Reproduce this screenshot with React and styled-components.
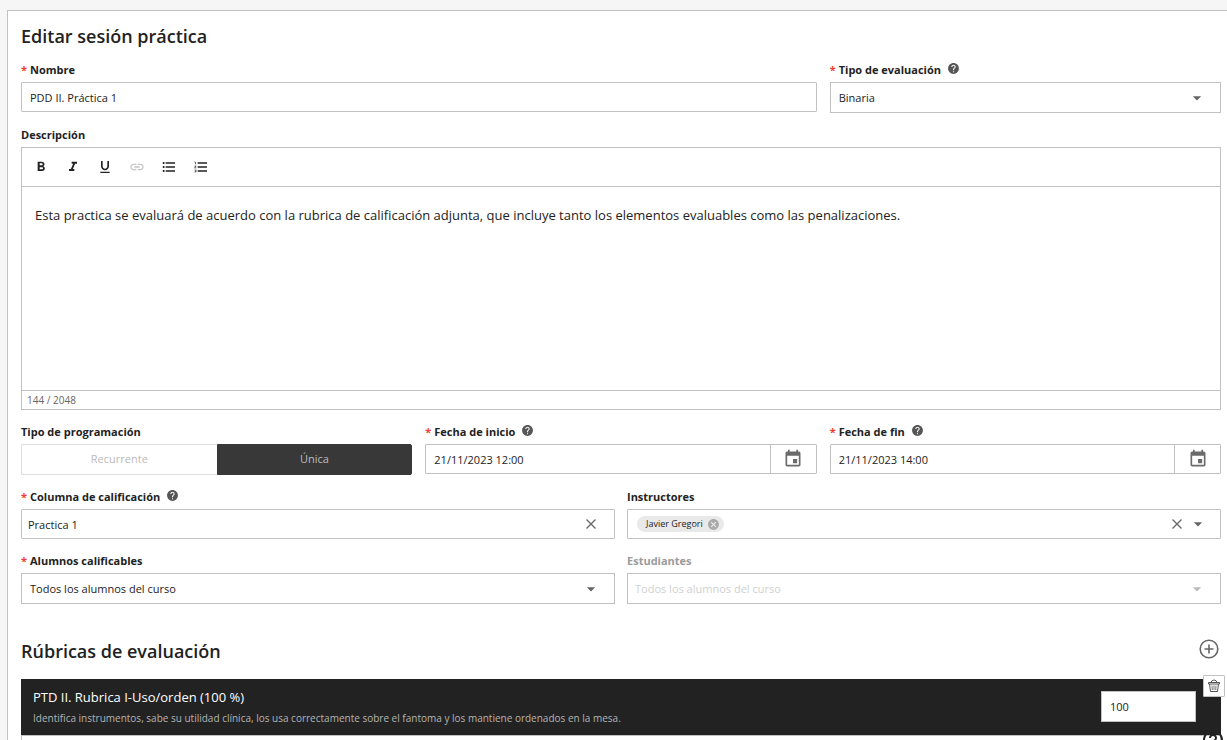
import React, { useId, useState } from "react";
import styled, { createGlobalStyle } from "styled-components";
import {
  MdHelp,
  MdHelpOutline,
  MdFormatBold,
  MdFormatItalic,
  MdFormatUnderlined,
  MdInsertLink,
  MdFormatListBulleted,
  MdFormatListNumbered,
  MdEvent,
  MdCancel,
  MdArrowDropDown,
} from "react-icons/md";

const GlobalStyle = createGlobalStyle`
  * { box-sizing: border-box; }
  html { scrollbar-width: none; }
  body {
    margin: 0;
    background: #f6f6f6;
    color: #222;
    font-family: "Open Sans", "Noto Sans", sans-serif;
    font-size: 11px;
  }
  button, input, select, textarea { font: inherit; color: inherit; }
  button { cursor: pointer; }
  svg { display: block; flex: none; }
`;

const Card = styled.main`
  margin: 10px 0 0 7px;
  padding: 12px 6px 40px 13px;
  background: #fff;
  border: 1px solid #c1c1c1;
  border-width: 1px 0 0 1px;
`;

const Title = styled.h1`
  margin: 0 0 13px;
  font-size: 18px;
  line-height: 26px;
  font-weight: 600;
`;

const Grid = styled.div`
  display: grid;
  grid-template-columns: repeat(${(p) => p.$columns}, minmax(0, 1fr));
  column-gap: ${(p) => (p.$columns === 2 ? 12 : 13)}px;
  align-items: start;
  margin-bottom: 14px;
`;

const FieldBox = styled.div`
  grid-column: span ${(p) => p.$span || 1};
  min-width: 0;
`;

const LabelLine = styled.div`
  display: flex;
  align-items: center;
  gap: 6px;
  height: 16px;
  margin-bottom: 4px;
  font-weight: 700;
  line-height: 16px;
  color: ${(p) => (p.$muted ? "#9b9b9b" : "#222")};
`;

const Required = styled.span`
  margin-right: 3px;
  color: #f23b34;
`;

const HelpButton = styled.button`
  display: flex;
  align-self: flex-start;
  padding: 0;
  border: 0;
  background: none;
  color: #555;
`;

const Control = styled.div`
  display: flex;
  align-items: center;
  position: relative;
  height: ${(p) => (p.$tall ? 31 : 30)}px;
  border: 1px solid #c1c1c1;
  border-radius: ${(p) => (p.$tall ? 0 : 1)}px;
  background: #fff;
`;

const TextInput = styled.input`
  flex: 1;
  min-width: 0;
  height: 100%;
  padding: 0 ${(p) => (p.$tight ? 6 : 8)}px;
  border: 0;
  outline: 0;
  background: none;
`;

const Select = styled.select`
  width: 100%;
  height: 100%;
  padding: 0 40px 1px ${(p) => (p.disabled ? 7 : 8)}px;
  border: 0;
  outline: 0;
  appearance: none;
  background: none;
  &:disabled { color: #d0d0d0; opacity: 1; }
`;

const SelectArrow = styled.span`
  position: absolute;
  right: 13px;
  color: ${(p) => (p.$muted ? "#bbb" : "#666")};
  pointer-events: none;
`;

const IconButton = styled.button`
  display: flex;
  padding: 0;
  border: 0;
  background: none;
  color: #666;
`;

const Trailing = styled.div`
  display: flex;
  align-items: center;
  gap: 4px;
  margin-left: auto;
  padding-right: ${(p) => (p.$wide ? 16 : 12)}px;
`;

const CalendarButton = styled.button`
  display: flex;
  align-items: center;
  justify-content: center;
  width: 46px;
  height: 100%;
  padding: 0 0 1px;
  border: 0;
  border-left: 1px solid #c1c1c1;
  background: none;
  color: #6b6b6b;
`;

const Editor = styled.div`
  border: 1px solid #c1c1c1;
`;

const Toolbar = styled.div`
  display: flex;
  align-items: center;
  gap: 16px;
  height: 39px;
  padding-left: 11px;
  border-bottom: 1px solid #c1c1c1;
`;

const ToolButton = styled.button`
  display: flex;
  padding: 0;
  border: 0;
  background: none;
  color: #222;
  &:disabled { color: #c4c4c4; }
`;

const EditorText = styled.textarea`
  display: block;
  width: 100%;
  height: 203px;
  padding: 18px 13px;
  border: 0;
  outline: 0;
  resize: none;
  font-size: 13px;
  line-height: 20px;
`;

const Counter = styled.div`
  padding-left: 5px;
  border-top: 1px solid #c1c1c1;
  font-size: 10px;
  line-height: 18px;
  color: #666;
`;

const Segmented = styled.div`
  display: grid;
  grid-template-columns: 1fr 1fr;
  height: 31px;
`;

const Segment = styled.button`
  padding: 0 0 2px;
  border: 1px solid ${(p) => (p.$active ? "#383838" : "#dedede")};
  border-right-width: ${(p) => (p.$active ? 1 : 0)}px;
  border-radius: ${(p) => (p.$active ? "0 2px 2px 0" : "2px 0 0 2px")};
  background: ${(p) => (p.$active ? "#383838" : "#fff")};
  color: ${(p) => (p.$active ? "#bdbdbd" : "#bbb")};
`;

const Chip = styled.span`
  display: flex;
  align-items: center;
  gap: 4px;
  height: 16px;
  margin-left: 9px;
  padding: 0 4px 0 9px;
  border-radius: 8px;
  background: #e9e9e9;
  font-size: 9px;
  line-height: 16px;
`;

const ChipRemove = styled(IconButton)`
  color: #aaa;
`;

const SectionHeader = styled.div`
  display: flex;
  align-items: center;
  justify-content: space-between;
  margin: 34px 0 15px;
  padding-right: 2px;
`;

const SectionTitle = styled.h2`
  margin: 0;
  font-size: 18px;
  line-height: 26px;
  font-weight: 600;
`;

const AddButton = styled(IconButton)`
  margin-bottom: 5px;
`;

const Rubric = styled.section`
  position: relative;
`;

const RubricHeader = styled.header`
  display: flex;
  align-items: center;
  justify-content: space-between;
  height: 56px;
  padding: 0 25px 1px 12px;
  background: #222;
`;

const RubricName = styled.h3`
  margin: 0;
  font-size: 13px;
  line-height: 20px;
  font-weight: 400;
  color: #fff;
`;

const RubricNote = styled.p`
  margin: 2px 0 0;
  font-size: 10px;
  line-height: 18px;
  font-weight: 400;
  color: #b4b4b4;
`;

const WeightInput = styled.input`
  width: 95px;
  height: 31px;
  padding: 0 8px;
  border: 1px solid #c1c1c1;
  outline: 0;
  background: #fff;
`;

const DeleteButton = styled.button`
  position: absolute;
  top: -4px;
  right: -4px;
  display: flex;
  align-items: center;
  justify-content: center;
  width: 22px;
  height: 22px;
  padding: 0;
  border: 1px solid #c1c1c1;
  border-radius: 1px;
  background: #fff;
  color: #555;
`;

const RubricBody = styled.div`
  min-height: 40px;
  border: 1px solid #c1c1c1;
`;

const RubricHelp = styled(IconButton)`
  position: absolute;
  top: 49px;
  right: -4px;
  color: #222;
`;

function Field({ label, id, required, help, muted, span, children }) {
  return (
    <FieldBox $span={span}>
      <LabelLine $muted={muted}>
        <label htmlFor={id}>
          {required && <Required>*</Required>}
          {label}
        </label>
        {help && (
          <HelpButton type="button" aria-label={"Ayuda: " + label}>
            <MdHelp size={13} />
          </HelpButton>
        )}
      </LabelLine>
      {children}
    </FieldBox>
  );
}

function SelectField({ option, disabled, ...field }) {
  const id = useId();
  return (
    <Field id={id} muted={disabled} {...field}>
      <Control $tall>
        <Select id={id} disabled={disabled}>
          <option>{option}</option>
        </Select>
        <SelectArrow $muted={disabled}>
          <MdArrowDropDown size={20} />
        </SelectArrow>
      </Control>
    </Field>
  );
}

function DateField({ value, ...field }) {
  const id = useId();
  return (
    <Field id={id} required help {...field}>
      <Control>
        <TextInput id={id} defaultValue={value} />
        <CalendarButton type="button" aria-label="Abrir calendario">
          <MdEvent size={20} />
        </CalendarButton>
      </Control>
    </Field>
  );
}

const ClearIcon = () => (
  <svg width="14" height="14" viewBox="0 0 14 14" fill="none" stroke="currentColor" strokeWidth="1.3">
    <path d="M2.500 2.500l9 9M11.500 2.500l-9 9" />
  </svg>
);

const PlusIcon = () => (
  <svg width="20" height="20" viewBox="0 0 20 20" fill="none" stroke="currentColor" strokeWidth="1.6">
    <circle cx="10" cy="10" r="8.800" />
    <path d="M10 5.500v9M5.500 10h9" />
  </svg>
);

const TrashIcon = () => (
  <svg width="14" height="14" viewBox="0 0 14 14" fill="none" stroke="currentColor" strokeWidth="1">
    <path d="M1.500 3.500h11v1.500h-11zM4 3.500q.5-2.500 3-2.500t3 2.500M2.500 5l1 7.500h7l1-7.500" />
    <path strokeWidth="0.8" d="M5 6.500l.3 4.500M7 6.500v4.500M9 6.500l-.3 4.500" />
  </svg>
);

export default function App() {
  const [schedule, setSchedule] = useState("Única");
  return (
    <>
      <GlobalStyle />
      <Card>
        <Title>Editar sesión práctica</Title>
        <Grid $columns={3}>
          <Field label="Nombre" id="name" required span={2}>
            <Control>
              <TextInput id="name" defaultValue="PDD II. Práctica 1" />
            </Control>
          </Field>
          <SelectField label="Tipo de evaluación" required help option="Binaria" />
        </Grid>

        <Grid $columns={1}>
          <Field label="Descripción" id="description">
            <Editor>
              <Toolbar>
                <ToolButton type="button" aria-label="Negrita"><MdFormatBold size={16} /></ToolButton>
                <ToolButton type="button" aria-label="Cursiva"><MdFormatItalic size={16} /></ToolButton>
                <ToolButton type="button" aria-label="Subrayado"><MdFormatUnderlined size={16} /></ToolButton>
                <ToolButton type="button" aria-label="Enlace" disabled><MdInsertLink size={16} /></ToolButton>
                <ToolButton type="button" aria-label="Lista"><MdFormatListBulleted size={16} /></ToolButton>
                <ToolButton type="button" aria-label="Lista numerada"><MdFormatListNumbered size={16} /></ToolButton>
              </Toolbar>
              <EditorText
                id="description"
                spellCheck={false}
                defaultValue="Esta practica se evaluará de acuerdo con la rubrica de calificación adjunta, que incluye tanto los elementos evaluables como las penalizaciones."
              />
              <Counter>144 / 2048</Counter>
            </Editor>
          </Field>
        </Grid>

        <Grid $columns={3}>
          <FieldBox>
            <LabelLine id="schedule-label">Tipo de programación</LabelLine>
            <Segmented role="group" aria-labelledby="schedule-label">
              {["Recurrente", "Única"].map((name) => (
                <Segment
                  key={name}
                  type="button"
                  $active={schedule === name}
                  aria-pressed={schedule === name}
                  onClick={() => setSchedule(name)}
                >
                  {name}
                </Segment>
              ))}
            </Segmented>
          </FieldBox>
          <DateField label="Fecha de inicio" value="21/11/2023 12:00" />
          <DateField label="Fecha de fin" value="21/11/2023 14:00" />
        </Grid>

        <Grid $columns={2}>
          <Field label="Columna de calificación" id="column" required help>
            <Control>
              <TextInput $tight id="column" defaultValue="Practica 1" />
              <Trailing $wide>
                <IconButton type="button" aria-label="Borrar"><ClearIcon /></IconButton>
              </Trailing>
            </Control>
          </Field>
          <Field label="Instructores" id="teachers">
            <Control>
              <Chip>
                Javier Gregori
                <ChipRemove type="button" aria-label="Quitar Javier Gregori"><MdCancel size={13} /></ChipRemove>
              </Chip>
              <TextInput id="teachers" />
              <Trailing>
                <IconButton type="button" aria-label="Borrar"><ClearIcon /></IconButton>
                <IconButton type="button" aria-label="Desplegar"><MdArrowDropDown size={20} /></IconButton>
              </Trailing>
            </Control>
          </Field>
        </Grid>

        <Grid $columns={2}>
          <SelectField label="Alumnos calificables" required option="Todos los alumnos del curso" />
          <SelectField label="Estudiantes" disabled option="Todos los alumnos del curso" />
        </Grid>

        <SectionHeader>
          <SectionTitle>Rúbricas de evaluación</SectionTitle>
          <AddButton type="button" aria-label="Añadir rúbrica"><PlusIcon /></AddButton>
        </SectionHeader>
        <Rubric>
          <RubricHeader>
            <div>
              <RubricName>PTD II. Rubrica I-Uso/orden (100 %)</RubricName>
              <RubricNote>
                Identifica instrumentos, sabe su utilidad clínica, los usa correctamente sobre el fantoma y los mantiene ordenados en la mesa.
              </RubricNote>
            </div>
            <WeightInput aria-label="Peso" defaultValue="100" />
          </RubricHeader>
          <RubricBody />
          <DeleteButton type="button" aria-label="Eliminar rúbrica"><TrashIcon /></DeleteButton>
          <RubricHelp type="button" aria-label="Ayuda: rúbrica"><MdHelpOutline size={24} /></RubricHelp>
        </Rubric>
      </Card>
    </>
  );
}
